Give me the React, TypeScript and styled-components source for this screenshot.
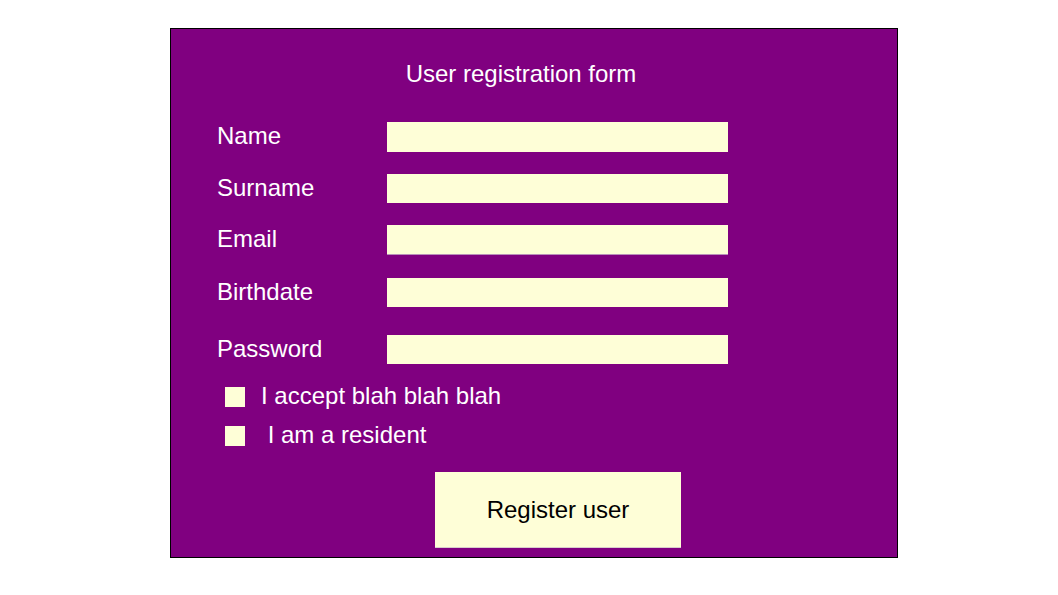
import React from "react";
import styled, { createGlobalStyle } from "styled-components";

const Global = createGlobalStyle`
  html, body { margin: 0; padding: 0; background: #ffffff; }
  body { font-family: "Liberation Sans", Arial, sans-serif; }
  * { box-sizing: border-box; }
`;

const Page = styled.div`
  padding: 28px 0 0 170px;
`;

const Panel = styled.form`
  width: 728px;
  height: 530px;
  background: #800080;
  border: 1px solid #000000;
  padding: 31px 0 0 46px;
  display: flex;
  flex-direction: column;
  font-family: "Liberation Sans", Arial, sans-serif;
  color: #ffffff;
`;

const Title = styled.h1`
  margin: 0 0 0 -46px;
  width: 700px;
  text-align: center;
  font-size: 24px;
  line-height: 28px;
  font-weight: normal;
`;

const Row = styled.div<{ $top: number; $height: number }>`
  display: flex;
  align-items: center;
  height: ${(p) => p.$height}px;
  margin-top: ${(p) => p.$top}px;
`;

const Label = styled.label`
  width: 170px;
  font-size: 24px;
  line-height: 28px;
  padding-bottom: 2px;
`;

const Field = styled.input<{ $underline?: boolean; $height: number }>`
  width: 341px;
  height: ${(p) => p.$height}px;
  margin: 0;
  padding: 0 4px;
  border: none;
  border-bottom: ${(p) => (p.$underline ? "1px solid #b98fb9" : "none")};
  background: #fefed7;
  font-family: "Liberation Sans", Arial, sans-serif;
  font-size: 18px;
  outline: none;
`;

const CheckRow = styled.label<{ $top: number }>`
  display: flex;
  align-items: center;
  height: 28px;
  margin-top: ${(p) => p.$top}px;
  padding-left: 8px;
  gap: 16px;
  font-size: 24px;
  line-height: 28px;
`;

const CheckText = styled.span`
  white-space: pre;
  padding-bottom: 3px;
`;

const Box = styled.input`
  appearance: none;
  width: 20px;
  height: 20px;
  margin: 0;
  border: none;
  background: #fefed7;
`;

const Button = styled.button`
  margin: 22px 0 0 218px;
  width: 246px;
  height: 76px;
  border: none;
  border-bottom: 1px solid #d9cccc;
  background: #fefed7;
  color: #000000;
  font-family: "Liberation Sans", Arial, sans-serif;
  font-size: 24px;
  padding: 0;
  cursor: pointer;
`;

const fields = [
  { label: "Name", top: 34, height: 30, type: "text" },
  { label: "Surname", top: 22, height: 29, type: "text" },
  { label: "Email", top: 22, height: 30, type: "email", underline: true },
  { label: "Birthdate", top: 23, height: 29, type: "text" },
  { label: "Password", top: 28, height: 29, type: "password" },
];

export default function App() {
  return (
    <>
      <Global />
      <Page>
        <Panel onSubmit={(e) => e.preventDefault()}>
          <Title>User registration form</Title>
          {fields.map((f) => (
            <Row key={f.label} $top={f.top} $height={f.height}>
              <Label htmlFor={f.label}>{f.label}</Label>
              <Field
                id={f.label}
                type={f.type}
                $height={f.height}
                $underline={f.underline}
              />
            </Row>
          ))}
          <CheckRow $top={19}>
            <Box type="checkbox" />
            <CheckText>I accept blah blah blah</CheckText>
          </CheckRow>
          <CheckRow $top={11}>
            <Box type="checkbox" />
            <CheckText>{" I am a resident"}</CheckText>
          </CheckRow>
          <Button type="submit">Register user</Button>
        </Panel>
      </Page>
    </>
  );
}
